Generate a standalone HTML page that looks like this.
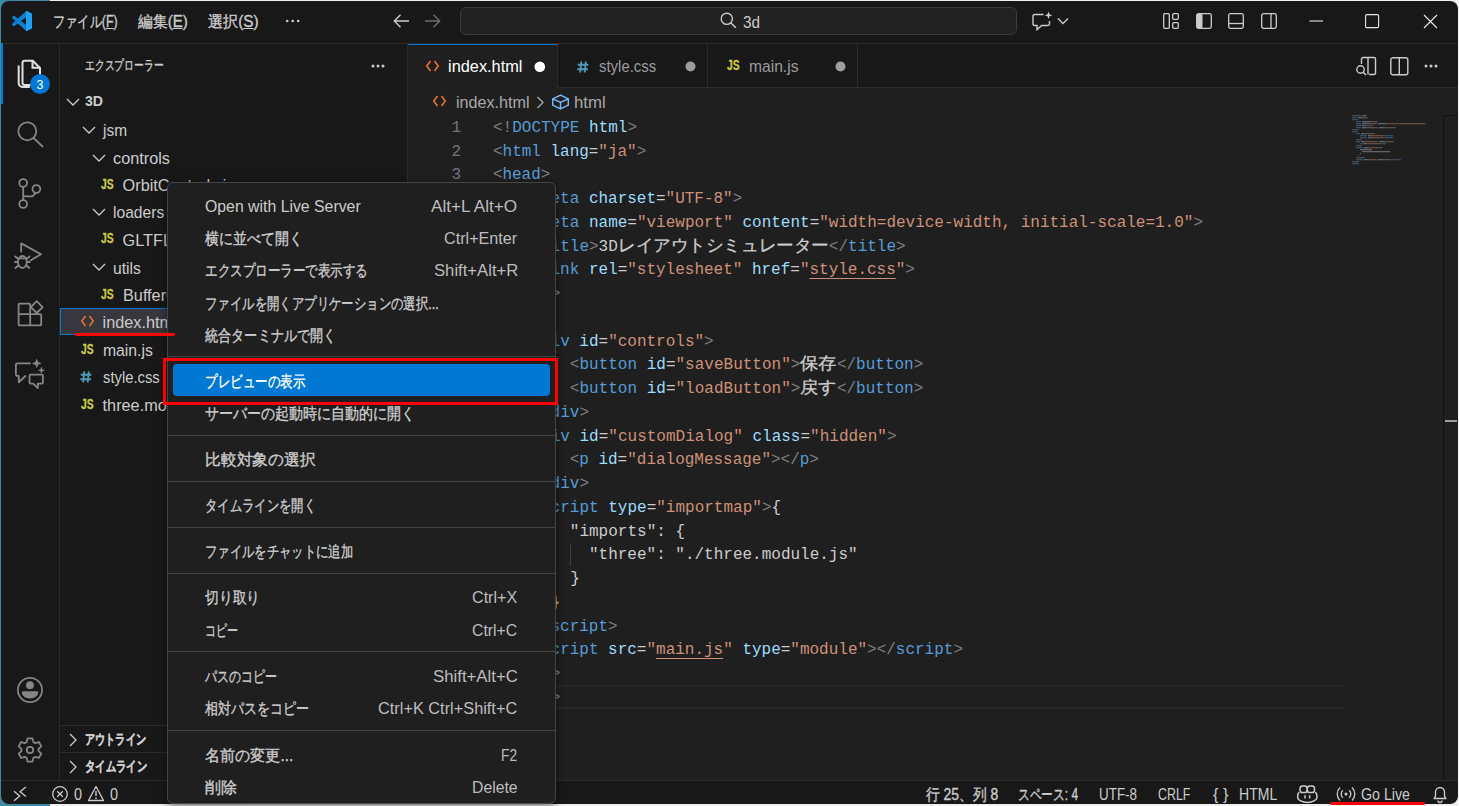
<!DOCTYPE html>
<html><head><meta charset="utf-8"><style>
*{box-sizing:border-box}
html,body{margin:0;padding:0;width:1459px;height:806px;overflow:hidden;background:#f0f0f0;font-family:"Liberation Sans",sans-serif;position:relative}
.a{position:absolute}
.t{position:absolute;white-space:nowrap;color:#cccccc}
.fit>span{display:inline-block;transform-origin:0 50%}
.cjk{-webkit-text-stroke:0.35px currentColor}
svg{position:absolute;overflow:visible}
.code{position:absolute;font-family:"Liberation Mono",monospace;font-size:16px;white-space:pre;line-height:23.75px;color:#cccccc}
.ln{position:absolute;font-family:"Liberation Mono",monospace;font-size:16px;line-height:23.75px;text-align:right}
.jpc{display:inline-block;overflow:visible;white-space:nowrap;vertical-align:baseline;color:#cccccc;font-family:"Liberation Sans",sans-serif;font-size:17px;line-height:20px;-webkit-text-stroke:0.3px #cccccc}
.jpc>span{display:inline-block;transform-origin:0 50%}
.fitc>span{display:inline-block;transform-origin:0 50%;white-space:pre}
</style></head><body>
<div class="a" style="left:0;top:0;width:1459px;height:806px;background:linear-gradient(90deg,#3f89a5 0,#3f89a5 50px,#eeeeee 50px,#f2f2f2 100%)"></div>
<div class="a" style="left:1px;top:1px;width:1457px;height:803px;background:#181818;border-radius:8px;overflow:hidden">
<div class="a" style="left:407px;top:87px;width:1050px;height:693px;background:#1f1f1f"></div>
</div>
<div class="a" style="left:1px;top:43px;width:1457px;height:1px;background:#2b2b2b;"></div>
<div class="a" style="left:59px;top:44px;width:1px;height:736px;background:#2b2b2b;"></div>
<div class="a" style="left:407px;top:44px;width:1px;height:736px;background:#2b2b2b;"></div>
<div class="a" style="left:1px;top:780px;width:1457px;height:1px;background:#2b2b2b;"></div>
<svg style="left:12px;top:11px" width="20" height="20" viewBox="0 0 100 100"><path d="M96.5 10.8L75.9.9a6.2 6.2 0 0 0-7.1 1.2L29.4 38 12.2 25a4.2 4.2 0 0 0-5.3.2l-5.5 5a4.2 4.2 0 0 0 0 6.2L16.3 50 1.4 63.6a4.2 4.2 0 0 0 0 6.2l5.5 5a4.2 4.2 0 0 0 5.3.2l17.2-13 39.4 36a6.2 6.2 0 0 0 7.1 1.2l20.6-9.9a6.3 6.3 0 0 0 3.5-5.6V16.4a6.3 6.3 0 0 0-3.5-5.6zM75 72.7L45.1 50 75 27.3z" fill="#0a7fd0"/><path d="M96.5 10.8L75.9.9a6.2 6.2 0 0 0-5.9.3L70 98.8a6.2 6.2 0 0 0 5.9.3l20.6-9.9a6.3 6.3 0 0 0 3.5-5.6V16.4a6.3 6.3 0 0 0-3.5-5.6z" fill="#22a0f0"/></svg>
<div class="t fit cjk" style="left:52.6px;top:10.7px;font-size:16.25px;line-height:20px;color:#cccccc;font-weight:normal;width:64.8px;"><span>ファイル(<u>F</u>)</span></div>
<div class="t fit cjk" style="left:137.5px;top:10.7px;font-size:16.25px;line-height:20px;color:#cccccc;font-weight:normal;width:50.0px;"><span>編集(<u>E</u>)</span></div>
<div class="t fit cjk" style="left:208.0px;top:10.7px;font-size:16.25px;line-height:20px;color:#cccccc;font-weight:normal;width:51.0px;"><span>選択(<u>S</u>)</span></div>
<svg style="left:285px;top:19px" width="16" height="4"><circle cx="2.2" cy="2" r="1.3" fill="#ccc"/><circle cx="7.7" cy="2" r="1.3" fill="#ccc"/><circle cx="13.2" cy="2" r="1.3" fill="#ccc"/></svg>
<svg style="left:392px;top:13px" width="18" height="16"><path d="M17 8H2.5M8.5 1.8L2.3 8l6.2 6.2" stroke="#cccccc" stroke-width="1.4" fill="none"/></svg>
<svg style="left:424px;top:13px" width="18" height="16"><path d="M1 8h14.5M9.5 1.8L15.7 8l-6.2 6.2" stroke="#6b6b6b" stroke-width="1.4" fill="none"/></svg>
<div class="a" style="left:460px;top:7px;width:557px;height:28px;background:#222222;border:1px solid #3c3c3c;border-radius:6px"></div>
<svg style="left:720px;top:12px" width="17" height="17"><circle cx="6.8" cy="6.8" r="5.6" stroke="#cccccc" stroke-width="1.4" fill="none"/><path d="M10.8 10.8L15.8 15.8" stroke="#cccccc" stroke-width="1.5"/></svg>
<div class="t fit" style="left:743.0px;top:11.5px;font-size:16.25px;line-height:20px;color:#cccccc;font-weight:normal;width:17.0px;"><span>3d</span></div>
<svg style="left:1031px;top:10px" width="24" height="22"><path d="M12.5 4.5H3.8A1.8 1.8 0 0 0 2 6.3v7.4a1.8 1.8 0 0 0 1.8 1.8H6v4.2l4.6-4.2h6.1a1.8 1.8 0 0 0 1.8-1.8V11" stroke="#cccccc" stroke-width="1.4" fill="none"/><path d="M17.5 1.5l1 2.8 2.8 1-2.8 1-1 2.8-1-2.8-2.8-1 2.8-1z" fill="#cccccc"/></svg>
<svg style="left:1057px;top:17px" width="12" height="8"><path d="M1 1.5l5 5 5-5" stroke="#cccccc" stroke-width="1.3" fill="none"/></svg>
<svg style="left:1163px;top:13px" width="16" height="16"><rect x="0.7" y="0.7" width="5.6" height="14.6" rx="1" stroke="#cccccc" stroke-width="1.3" fill="none"/><rect x="9.7" y="0.7" width="5.6" height="5.6" rx="1" stroke="#cccccc" stroke-width="1.3" fill="none"/><rect x="9.7" y="9.7" width="5.6" height="5.6" rx="1" stroke="#cccccc" stroke-width="1.3" fill="none"/></svg>
<svg style="left:1196px;top:13px" width="16" height="16"><rect x="0.7" y="0.7" width="14.6" height="14.6" rx="1.8" stroke="#cccccc" stroke-width="1.3" fill="none"/><rect x="1" y="1" width="5.5" height="14" rx="1" fill="#cccccc"/></svg>
<svg style="left:1228px;top:13px" width="16" height="16"><rect x="0.7" y="0.7" width="14.6" height="14.6" rx="1.8" stroke="#cccccc" stroke-width="1.3" fill="none"/><path d="M1 10.5h14" stroke="#cccccc" stroke-width="1.3"/></svg>
<svg style="left:1261px;top:13px" width="16" height="16"><rect x="0.7" y="0.7" width="14.6" height="14.6" rx="1.8" stroke="#cccccc" stroke-width="1.3" fill="none"/><path d="M10 1v14" stroke="#cccccc" stroke-width="1.3"/></svg>
<svg style="left:1309px;top:20px" width="15" height="2"><path d="M0.5 1h13.5" stroke="#e6e6e6" stroke-width="1.1"/></svg>
<svg style="left:1365px;top:14px" width="15" height="15"><rect x="0.6" y="0.6" width="13" height="13" rx="1.2" stroke="#e6e6e6" stroke-width="1.1" fill="none"/></svg>
<svg style="left:1423px;top:14px" width="15" height="15"><path d="M1 1l13 13M14 1L1 14" stroke="#e6e6e6" stroke-width="1.1"/></svg>
<div class="a" style="left:1px;top:43px;width:2px;height:61px;background:#0078d4;"></div>
<svg style="left:0px;top:0px" width="60" height="110"><path d="M24.5 60.8h8.3l7.2 7.2v15.2a1.8 1.8 0 0 1-1.8 1.8H24.5a2 2 0 0 1-2-2V62.8a2 2 0 0 1 2-2z" stroke="#e0e0e0" stroke-width="2" fill="none"/><path d="M32.5 61v6.8h7.3" stroke="#e0e0e0" stroke-width="2" fill="none"/><path d="M18.7 65.5v17.8a3.6 3.6 0 0 0 3.6 3.6h7.5" stroke="#e0e0e0" stroke-width="2" fill="none"/></svg>
<svg style="left:30px;top:74px" width="20" height="20"><circle cx="10" cy="10" r="10" fill="#0078d4"/><text x="10" y="14.6" text-anchor="middle" font-family="Liberation Sans" font-size="12.5" fill="#fff">3</text></svg>
<svg style="left:0px;top:0px" width="60" height="400"><g stroke="#868686" stroke-width="1.8" fill="none" stroke-linecap="round" stroke-linejoin="round"><circle cx="27.3" cy="131.3" r="9"/><path d="M34 138.3L42.5 146.5"/><circle cx="23.2" cy="183" r="3.9"/><circle cx="23.2" cy="204" r="3.9"/><circle cx="36.4" cy="189" r="3.9"/><path d="M23.2 187v13M35.8 192.8L32.5 196.4H23.4"/><path d="M21.2 251.5V243.4L41 254.2 30.8 260.3"/><ellipse cx="22.4" cy="262" rx="4.4" ry="6"/><path d="M18.2 258.3h8.4M15.2 256.5l2.8 2.2M29.6 256.5l-2.8 2.2M15 262h3M26.8 262h3M15.4 268l2.8-2.3M29.4 268l-2.8-2.3"/><path d="M19.6 303.6h9.6a1 1 0 0 1 1 1V314.2h10a1 1 0 0 1 1 1v9.2a1 1 0 0 1-1 1H19.6a1 1 0 0 1-1-1V304.6a1 1 0 0 1 1-1zM18.6 314.2h11.6V325.4"/><path d="M36.7 301.2l5.9 5.9-5.9 5.9-5.9-5.9z"/><path d="M30 363.4H17.4a1.5 1.5 0 0 0-1.5 1.5v9.6a1.5 1.5 0 0 0 1.5 1.5h1.4v6.3l6.6-6.3"/><path d="M30.7 374.6h11a1.2 1.2 0 0 1 1.2 1.2v6.6a1.2 1.2 0 0 1-1.2 1.2h-3.9v4.5l-4.6-4.5h-2.5a1.2 1.2 0 0 1-1.2-1.2v-6.6a1.2 1.2 0 0 1 1.2-1.2z"/></g><path d="M36.7 358.5l1.4 3.5 3.5 1.4-3.5 1.4-1.4 3.5-1.4-3.5-3.5-1.4 3.5-1.4z" fill="#868686"/><path d="M41.4 366.7l1 2.5 2.5 1-2.5 1-1 2.5-1-2.5-2.5-1 2.5-1z" fill="#868686"/></svg>
<svg style="left:17px;top:677px" width="26" height="26"><circle cx="13" cy="13" r="12.1" stroke="#868686" stroke-width="1.7" fill="none"/><circle cx="13" cy="8.2" r="3.9" fill="#868686"/><path d="M6.2 14.3h13.6a1.3 1.3 0 0 1 1.3 1.3c0 3.5-3.6 5.8-8.1 5.8s-8.1-2.3-8.1-5.8a1.3 1.3 0 0 1 1.3-1.3z" fill="#868686"/></svg>
<svg style="left:17px;top:737px" width="26" height="26"><polygon points="9.65,5.08 10.52,1.36 15.48,1.36 16.35,5.08 18.19,6.14 21.84,5.03 24.32,9.33 21.53,11.94 21.53,14.06 24.32,16.67 21.84,20.97 18.19,19.86 16.35,20.92 15.48,24.64 10.52,24.64 9.65,20.92 7.81,19.86 4.16,20.97 1.68,16.67 4.47,14.06 4.47,11.94 1.68,9.33 4.16,5.03 7.81,6.14" stroke="#868686" stroke-width="1.8" fill="none" stroke-linejoin="round"/><circle cx="13" cy="13" r="3.2" stroke="#868686" stroke-width="1.8" fill="none"/></svg>
<div class="t fit cjk" style="left:85.0px;top:56.0px;font-size:13.75px;line-height:20px;color:#cccccc;font-weight:normal;width:78.5px;"><span>エクスプローラー</span></div>
<svg style="left:371px;top:64px" width="14" height="4"><circle cx="2" cy="2" r="1.5" fill="#ccc"/><circle cx="7" cy="2" r="1.5" fill="#ccc"/><circle cx="12" cy="2" r="1.5" fill="#ccc"/></svg>
<svg style="left:66px;top:98px" width="14" height="8"><path d="M1 1l6 6 6-6" stroke="#cccccc" stroke-width="1.3" fill="none"/></svg>
<div class="t fit" style="left:85.0px;top:92.0px;font-size:13.75px;line-height:20px;color:#cccccc;font-weight:bold;width:18.5px;"><span>3D</span></div>
<svg style="left:82px;top:126px" width="14" height="8"><path d="M1 1l6 6 6-6" stroke="#cccccc" stroke-width="1.3" fill="none"/></svg>
<div class="t fit" style="left:102.6px;top:120.0px;font-size:16.25px;line-height:20px;color:#cccccc;font-weight:normal;width:23.8px;"><span>jsm</span></div>
<svg style="left:92px;top:154px" width="14" height="8"><path d="M1 1l6 6 6-6" stroke="#cccccc" stroke-width="1.3" fill="none"/></svg>
<div class="t fit" style="left:113.0px;top:147.5px;font-size:16.25px;line-height:20px;color:#cccccc;font-weight:normal;width:57.0px;"><span>controls</span></div>
<div class="t fit" style="left:101.0px;top:174.0px;font-size:14px;line-height:20px;color:#cbcb41;font-weight:bold;-webkit-text-stroke:0.3px #cbcb41;width:12.5px;"><span>JS</span></div>
<div class="t" style="left:122.6px;top:175.0px;font-size:16.25px;line-height:20px;color:#cccccc;font-weight:normal;">OrbitControls.js</div>
<svg style="left:92px;top:208px" width="14" height="8"><path d="M1 1l6 6 6-6" stroke="#cccccc" stroke-width="1.3" fill="none"/></svg>
<div class="t fit" style="left:113.0px;top:202.0px;font-size:16.25px;line-height:20px;color:#cccccc;font-weight:normal;width:51.0px;"><span>loaders</span></div>
<div class="t fit" style="left:101.0px;top:228.0px;font-size:14px;line-height:20px;color:#cbcb41;font-weight:bold;-webkit-text-stroke:0.3px #cbcb41;width:12.5px;"><span>JS</span></div>
<div class="t" style="left:122.6px;top:229.5px;font-size:16.25px;line-height:20px;color:#cccccc;font-weight:normal;">GLTFLoader.js</div>
<svg style="left:92px;top:263px" width="14" height="8"><path d="M1 1l6 6 6-6" stroke="#cccccc" stroke-width="1.3" fill="none"/></svg>
<div class="t fit" style="left:113.0px;top:257.5px;font-size:16.25px;line-height:20px;color:#cccccc;font-weight:normal;width:28.0px;"><span>utils</span></div>
<div class="t fit" style="left:101.0px;top:283.5px;font-size:14px;line-height:20px;color:#cbcb41;font-weight:bold;-webkit-text-stroke:0.3px #cbcb41;width:12.5px;"><span>JS</span></div>
<div class="t" style="left:123.0px;top:285.0px;font-size:16.25px;line-height:20px;color:#cccccc;font-weight:normal;">BufferGeometryUtils.js</div>
<div class="a" style="left:60px;top:308px;width:347px;height:27px;background:#37373d;border:1px solid #0078d4"></div>
<svg style="left:81px;top:315px" width="13" height="12"><path d="M4.5 1L0.8 6l3.7 5M8.5 1l3.7 5-3.7 5" stroke="#e8702f" stroke-width="1.6" fill="none"/></svg>
<div class="t" style="left:102.6px;top:312.0px;font-size:16.25px;line-height:20px;color:#cccccc;font-weight:normal;">index.html</div>
<div class="t fit" style="left:81.0px;top:338.5px;font-size:14px;line-height:20px;color:#cbcb41;font-weight:bold;-webkit-text-stroke:0.3px #cbcb41;width:12.5px;"><span>JS</span></div>
<div class="t fit" style="left:102.6px;top:340.0px;font-size:16.25px;line-height:20px;color:#cccccc;font-weight:normal;width:49.4px;"><span>main.js</span></div>
<svg style="left:80px;top:371px" width="12" height="12"><path d="M4.3 0.5L3.2 11.5M8.8 0.5L7.7 11.5M0.8 3.8h10.6M0.4 8.2h10.6" stroke="#519aba" stroke-width="1.9" fill="none"/></svg>
<div class="t fit" style="left:102.6px;top:367.0px;font-size:16.25px;line-height:20px;color:#cccccc;font-weight:normal;width:56.4px;"><span>style.css</span></div>
<div class="t fit" style="left:81.0px;top:393.5px;font-size:14px;line-height:20px;color:#cbcb41;font-weight:bold;-webkit-text-stroke:0.3px #cbcb41;width:12.5px;"><span>JS</span></div>
<div class="t" style="left:102.6px;top:394.5px;font-size:16.25px;line-height:20px;color:#cccccc;font-weight:normal;">three.module.js</div>
<div class="a" style="left:75px;top:332.5px;width:100px;height:3px;background:#ff0000;border-radius:1.5px"></div>
<div class="a" style="left:60px;top:725px;width:347px;height:1px;background:#2b2b2b;"></div>
<div class="a" style="left:60px;top:752px;width:347px;height:1px;background:#2b2b2b;"></div>
<svg style="left:69px;top:733px" width="9" height="14"><path d="M1 1l6 6-6 6" stroke="#cccccc" stroke-width="1.3" fill="none"/></svg>
<div class="t fit cjk" style="left:85.0px;top:730.0px;font-size:13.75px;line-height:20px;color:#cccccc;font-weight:bold;width:61.0px;"><span>アウトライン</span></div>
<svg style="left:69px;top:760px" width="9" height="14"><path d="M1 1l6 6-6 6" stroke="#cccccc" stroke-width="1.3" fill="none"/></svg>
<div class="t fit cjk" style="left:85.0px;top:757.0px;font-size:13.75px;line-height:20px;color:#cccccc;font-weight:bold;width:62.0px;"><span>タイムライン</span></div>
<div class="a" style="left:408px;top:44px;width:149px;height:44px;background:#1f1f1f;border-top:1px solid #0078d4"></div>
<div class="a" style="left:408px;top:87px;width:1050px;height:1px;background:#2b2b2b;"></div>
<div class="a" style="left:408px;top:87px;width:149px;height:1px;background:#1f1f1f;"></div>
<div class="a" style="left:557px;top:44px;width:1px;height:43px;background:#2b2b2b;"></div>
<div class="a" style="left:707px;top:44px;width:1px;height:43px;background:#2b2b2b;"></div>
<div class="a" style="left:857px;top:44px;width:1px;height:43px;background:#2b2b2b;"></div>
<svg style="left:426px;top:59.5px" width="13" height="12"><path d="M4.5 1L0.8 6l3.7 5M8.5 1l3.7 5-3.7 5" stroke="#e8702f" stroke-width="1.6" fill="none"/></svg>
<div class="t fit" style="left:447.6px;top:55.8px;font-size:16.25px;line-height:20px;color:#ffffff;font-weight:normal;width:74.4px;"><span>index.html</span></div>
<svg style="left:534px;top:61px" width="12" height="12"><circle cx="5.8" cy="5.8" r="5.3" fill="#ffffff"/></svg>
<svg style="left:577px;top:60.5px" width="12" height="12"><path d="M4.3 0.5L3.2 11.5M8.8 0.5L7.7 11.5M0.8 3.8h10.6M0.4 8.2h10.6" stroke="#519aba" stroke-width="1.9" fill="none"/></svg>
<div class="t fit" style="left:598.5px;top:55.8px;font-size:16.25px;line-height:20px;color:#9d9d9d;font-weight:normal;width:57.0px;"><span>style.css</span></div>
<svg style="left:685px;top:61px" width="12" height="12"><circle cx="5.5" cy="5.5" r="5" fill="#9d9d9d"/></svg>
<div class="t fit" style="left:726.5px;top:55.0px;font-size:14px;line-height:20px;color:#cbcb41;font-weight:bold;-webkit-text-stroke:0.3px #cbcb41;width:12.5px;"><span>JS</span></div>
<div class="t fit" style="left:749.0px;top:55.8px;font-size:16.25px;line-height:20px;color:#9d9d9d;font-weight:normal;width:49.0px;"><span>main.js</span></div>
<svg style="left:835px;top:61px" width="12" height="12"><circle cx="5.5" cy="5.5" r="5" fill="#9d9d9d"/></svg>
<svg style="left:1355px;top:56px" width="22" height="20"><path d="M8 1.5h11a1.5 1.5 0 0 1 1.5 1.5v14a1.5 1.5 0 0 1-1.5 1.5h-5M13 1.5v17M8 1.5a1.5 1.5 0 0 0-1.5 1.5v5" stroke="#cccccc" stroke-width="1.4" fill="none"/><circle cx="5.5" cy="13.5" r="3.7" stroke="#cccccc" stroke-width="1.4" fill="none"/><path d="M8.2 16.2L11 19" stroke="#cccccc" stroke-width="1.5"/></svg>
<svg style="left:1390px;top:57px" width="19" height="19"><rect x="0.8" y="0.8" width="17" height="17" rx="2" stroke="#cccccc" stroke-width="1.4" fill="none"/><path d="M9.3 1v17" stroke="#cccccc" stroke-width="1.4"/></svg>
<svg style="left:1424px;top:64px" width="14" height="4"><circle cx="2" cy="2" r="1.5" fill="#ccc"/><circle cx="7" cy="2" r="1.5" fill="#ccc"/><circle cx="12" cy="2" r="1.5" fill="#ccc"/></svg>
<svg style="left:433px;top:95px" width="13" height="12"><path d="M4.5 1L0.8 6l3.7 5M8.5 1l3.7 5-3.7 5" stroke="#e8702f" stroke-width="1.6" fill="none"/></svg>
<div class="t fit" style="left:455.5px;top:91.8px;font-size:16.25px;line-height:20px;color:#a9a9a9;font-weight:normal;width:73.5px;"><span>index.html</span></div>
<svg style="left:536px;top:96px" width="9" height="13"><path d="M1.5 1l5.5 5.5-5.5 5.5" stroke="#a9a9a9" stroke-width="1.3" fill="none"/></svg>
<svg style="left:551px;top:94px" width="19" height="16"><path d="M9.5 1.2l7.8 3.6v6.4l-7.8 3.6-7.8-3.6V4.8z M1.7 4.8l7.8 3.6 7.8-3.6M9.5 8.4v6.4" stroke="#75beff" stroke-width="1.4" fill="none" stroke-linejoin="round"/></svg>
<div class="t fit" style="left:574.0px;top:91.8px;font-size:16.25px;line-height:20px;color:#a9a9a9;font-weight:normal;width:32.0px;"><span>html</span></div>
<div class="a" style="left:480px;top:685px;width:864px;height:24px;background:transparent;border-top:2px solid #282828;border-bottom:2px solid #282828"></div>
<div class="a" style="left:570px;top:543px;width:1px;height:23px;background:#404040;"></div>
<div class="ln" style="left:420px;top:116.92px;width:41px;color:#6e7681">1</div>
<div class="code fitc" style="left:493.0px;top:116.92px;width:144.00px"><span><span style="color:#808080">&lt;!</span><span style="color:#569cd6">DOCTYPE</span><span style="color:#cccccc"> </span><span style="color:#9cdcfe">html</span><span style="color:#808080">&gt;</span></span></div>
<div class="ln" style="left:420px;top:140.68px;width:41px;color:#6e7681">2</div>
<div class="code fitc" style="left:493.0px;top:140.68px;width:153.60px"><span><span style="color:#808080">&lt;</span><span style="color:#569cd6">html</span><span style="color:#cccccc"> </span><span style="color:#9cdcfe">lang</span><span style="color:#cccccc">=</span><span style="color:#ce9178">&quot;</span><span style="color:#ce9178">ja</span><span style="color:#ce9178">&quot;</span><span style="color:#808080">&gt;</span></span></div>
<div class="ln" style="left:420px;top:164.43px;width:41px;color:#6e7681">3</div>
<div class="code fitc" style="left:493.0px;top:164.43px;width:57.60px"><span><span style="color:#808080">&lt;</span><span style="color:#569cd6">head</span><span style="color:#808080">&gt;</span></span></div>
<div class="ln" style="left:420px;top:188.18px;width:41px;color:#6e7681">4</div>
<div class="code fitc" style="left:493.0px;top:188.18px;width:249.60px"><span>    <span style="color:#808080">&lt;</span><span style="color:#569cd6">meta</span><span style="color:#cccccc"> </span><span style="color:#9cdcfe">charset</span><span style="color:#cccccc">=</span><span style="color:#ce9178">&quot;</span><span style="color:#ce9178">UTF-8</span><span style="color:#ce9178">&quot;</span><span style="color:#808080">&gt;</span></span></div>
<div class="ln" style="left:420px;top:211.93px;width:41px;color:#6e7681">5</div>
<div class="code fitc" style="left:493.0px;top:211.93px;width:710.40px"><span>    <span style="color:#808080">&lt;</span><span style="color:#569cd6">meta</span><span style="color:#cccccc"> </span><span style="color:#9cdcfe">name</span><span style="color:#cccccc">=</span><span style="color:#ce9178">&quot;</span><span style="color:#ce9178">viewport</span><span style="color:#ce9178">&quot;</span><span style="color:#cccccc"> </span><span style="color:#9cdcfe">content</span><span style="color:#cccccc">=</span><span style="color:#ce9178">&quot;</span><span style="color:#ce9178">width=device-width, initial-scale=1.0</span><span style="color:#ce9178">&quot;</span><span style="color:#808080">&gt;</span></span></div>
<div class="ln" style="left:420px;top:235.68px;width:41px;color:#6e7681">6</div>
<div class="code fitc" style="left:493.0px;top:235.68px;width:412.80px"><span>    <span style="color:#808080">&lt;</span><span style="color:#569cd6">title</span><span style="color:#808080">&gt;</span><span style="color:#cccccc">3D</span><span class="jpc" style="width:211.2px"><span>レイアウトシミュレーター</span></span><span style="color:#808080">&lt;/</span><span style="color:#569cd6">title</span><span style="color:#808080">&gt;</span></span></div>
<div class="ln" style="left:420px;top:259.43px;width:41px;color:#6e7681">7</div>
<div class="code fitc" style="left:493.0px;top:259.43px;width:422.40px"><span>    <span style="color:#808080">&lt;</span><span style="color:#569cd6">link</span><span style="color:#cccccc"> </span><span style="color:#9cdcfe">rel</span><span style="color:#cccccc">=</span><span style="color:#ce9178">&quot;</span><span style="color:#ce9178">stylesheet</span><span style="color:#ce9178">&quot;</span><span style="color:#cccccc"> </span><span style="color:#9cdcfe">href</span><span style="color:#cccccc">=</span><span style="color:#ce9178">&quot;</span><span style="color:#ce9178;text-decoration:underline;text-underline-offset:4px;text-decoration-thickness:1px">style.css</span><span style="color:#ce9178">&quot;</span><span style="color:#808080">&gt;</span></span></div>
<div class="ln" style="left:420px;top:283.18px;width:41px;color:#6e7681">8</div>
<div class="code fitc" style="left:493.0px;top:283.18px;width:67.20px"><span><span style="color:#808080">&lt;/</span><span style="color:#569cd6">head</span><span style="color:#808080">&gt;</span></span></div>
<div class="ln" style="left:420px;top:306.93px;width:41px;color:#6e7681">9</div>
<div class="code fitc" style="left:493.0px;top:306.93px;width:57.60px"><span><span style="color:#808080">&lt;</span><span style="color:#569cd6">body</span><span style="color:#808080">&gt;</span></span></div>
<div class="ln" style="left:420px;top:330.68px;width:41px;color:#6e7681">10</div>
<div class="code fitc" style="left:493.0px;top:330.68px;width:220.80px"><span>    <span style="color:#808080">&lt;</span><span style="color:#569cd6">div</span><span style="color:#cccccc"> </span><span style="color:#9cdcfe">id</span><span style="color:#cccccc">=</span><span style="color:#ce9178">&quot;</span><span style="color:#ce9178">controls</span><span style="color:#ce9178">&quot;</span><span style="color:#808080">&gt;</span></span></div>
<div class="ln" style="left:420px;top:354.43px;width:41px;color:#6e7681">11</div>
<div class="code fitc" style="left:493.0px;top:354.43px;width:430.10px"><span>        <span style="color:#808080">&lt;</span><span style="color:#569cd6">button</span><span style="color:#cccccc"> </span><span style="color:#9cdcfe">id</span><span style="color:#cccccc">=</span><span style="color:#ce9178">&quot;</span><span style="color:#ce9178">saveButton</span><span style="color:#ce9178">&quot;</span><span style="color:#808080">&gt;</span><span class="jpc" style="width:36.5px"><span>保存</span></span><span style="color:#808080">&lt;/</span><span style="color:#569cd6">button</span><span style="color:#808080">&gt;</span></span></div>
<div class="ln" style="left:420px;top:378.18px;width:41px;color:#6e7681">12</div>
<div class="code fitc" style="left:493.0px;top:378.18px;width:430.10px"><span>        <span style="color:#808080">&lt;</span><span style="color:#569cd6">button</span><span style="color:#cccccc"> </span><span style="color:#9cdcfe">id</span><span style="color:#cccccc">=</span><span style="color:#ce9178">&quot;</span><span style="color:#ce9178">loadButton</span><span style="color:#ce9178">&quot;</span><span style="color:#808080">&gt;</span><span class="jpc" style="width:36.5px"><span>戻す</span></span><span style="color:#808080">&lt;/</span><span style="color:#569cd6">button</span><span style="color:#808080">&gt;</span></span></div>
<div class="ln" style="left:420px;top:401.93px;width:41px;color:#6e7681">13</div>
<div class="code fitc" style="left:493.0px;top:401.93px;width:96.00px"><span>    <span style="color:#808080">&lt;/</span><span style="color:#569cd6">div</span><span style="color:#808080">&gt;</span></span></div>
<div class="ln" style="left:420px;top:425.68px;width:41px;color:#6e7681">14</div>
<div class="code fitc" style="left:493.0px;top:425.68px;width:403.20px"><span>    <span style="color:#808080">&lt;</span><span style="color:#569cd6">div</span><span style="color:#cccccc"> </span><span style="color:#9cdcfe">id</span><span style="color:#cccccc">=</span><span style="color:#ce9178">&quot;</span><span style="color:#ce9178">customDialog</span><span style="color:#ce9178">&quot;</span><span style="color:#cccccc"> </span><span style="color:#9cdcfe">class</span><span style="color:#cccccc">=</span><span style="color:#ce9178">&quot;</span><span style="color:#ce9178">hidden</span><span style="color:#ce9178">&quot;</span><span style="color:#808080">&gt;</span></span></div>
<div class="ln" style="left:420px;top:449.43px;width:41px;color:#6e7681">15</div>
<div class="code fitc" style="left:493.0px;top:449.43px;width:326.40px"><span>        <span style="color:#808080">&lt;</span><span style="color:#569cd6">p</span><span style="color:#cccccc"> </span><span style="color:#9cdcfe">id</span><span style="color:#cccccc">=</span><span style="color:#ce9178">&quot;</span><span style="color:#ce9178">dialogMessage</span><span style="color:#ce9178">&quot;</span><span style="color:#808080">&gt;</span><span style="color:#808080">&lt;/</span><span style="color:#569cd6">p</span><span style="color:#808080">&gt;</span></span></div>
<div class="ln" style="left:420px;top:473.18px;width:41px;color:#6e7681">16</div>
<div class="code fitc" style="left:493.0px;top:473.18px;width:96.00px"><span>    <span style="color:#808080">&lt;/</span><span style="color:#569cd6">div</span><span style="color:#808080">&gt;</span></span></div>
<div class="ln" style="left:420px;top:496.93px;width:41px;color:#6e7681">17</div>
<div class="code fitc" style="left:493.0px;top:496.93px;width:288.00px"><span>    <span style="color:#808080">&lt;</span><span style="color:#569cd6">script</span><span style="color:#cccccc"> </span><span style="color:#9cdcfe">type</span><span style="color:#cccccc">=</span><span style="color:#ce9178">&quot;</span><span style="color:#ce9178">importmap</span><span style="color:#ce9178">&quot;</span><span style="color:#808080">&gt;</span><span style="color:#cccccc">{</span></span></div>
<div class="ln" style="left:420px;top:520.67px;width:41px;color:#6e7681">18</div>
<div class="code fitc" style="left:493.0px;top:520.67px;width:192.00px"><span>        <span style="color:#cccccc">&quot;imports&quot;: {</span></span></div>
<div class="ln" style="left:420px;top:544.42px;width:41px;color:#6e7681">19</div>
<div class="code fitc" style="left:493.0px;top:544.42px;width:364.80px"><span>          <span style="color:#cccccc">&quot;three&quot;: &quot;./three.module.js&quot;</span></span></div>
<div class="ln" style="left:420px;top:568.17px;width:41px;color:#6e7681">20</div>
<div class="code fitc" style="left:493.0px;top:568.17px;width:86.40px"><span>        <span style="color:#cccccc">}</span></span></div>
<div class="ln" style="left:420px;top:591.92px;width:41px;color:#6e7681">21</div>
<div class="code fitc" style="left:493.0px;top:591.92px;width:67.20px"><span>      <span style="color:#d7ba7d">}</span></span></div>
<div class="ln" style="left:420px;top:615.67px;width:41px;color:#6e7681">22</div>
<div class="code fitc" style="left:493.0px;top:615.67px;width:124.80px"><span>    <span style="color:#808080">&lt;/</span><span style="color:#569cd6">script</span><span style="color:#808080">&gt;</span></span></div>
<div class="ln" style="left:420px;top:639.42px;width:41px;color:#6e7681">23</div>
<div class="code fitc" style="left:493.0px;top:639.42px;width:470.40px"><span>    <span style="color:#808080">&lt;</span><span style="color:#569cd6">script</span><span style="color:#cccccc"> </span><span style="color:#9cdcfe">src</span><span style="color:#cccccc">=</span><span style="color:#ce9178">&quot;</span><span style="color:#ce9178;text-decoration:underline;text-underline-offset:4px;text-decoration-thickness:1px">main.js</span><span style="color:#ce9178">&quot;</span><span style="color:#cccccc"> </span><span style="color:#9cdcfe">type</span><span style="color:#cccccc">=</span><span style="color:#ce9178">&quot;</span><span style="color:#ce9178">module</span><span style="color:#ce9178">&quot;</span><span style="color:#808080">&gt;</span><span style="color:#808080">&lt;/</span><span style="color:#569cd6">script</span><span style="color:#808080">&gt;</span></span></div>
<div class="ln" style="left:420px;top:663.17px;width:41px;color:#6e7681">24</div>
<div class="code fitc" style="left:493.0px;top:663.17px;width:67.20px"><span><span style="color:#808080">&lt;/</span><span style="color:#569cd6">body</span><span style="color:#808080">&gt;</span></span></div>
<div class="ln" style="left:420px;top:686.92px;width:41px;color:#cccccc">25</div>
<div class="code fitc" style="left:493.0px;top:686.92px;width:67.20px"><span><span style="color:#808080">&lt;/</span><span style="color:#569cd6">html</span><span style="color:#808080">&gt;</span></span></div>
<svg style="left:1352px;top:115px" width="90" height="65"><rect x="0.00" y="0.00" width="2.00" height="1.3" fill="#808080" opacity="0.4"/><rect x="2.00" y="0.00" width="7.00" height="1.3" fill="#569cd6" opacity="0.4"/><rect x="10.00" y="0.00" width="4.00" height="1.3" fill="#9cdcfe" opacity="0.4"/><rect x="14.00" y="0.00" width="1.00" height="1.3" fill="#808080" opacity="0.4"/><rect x="0.00" y="2.00" width="1.00" height="1.3" fill="#808080" opacity="0.4"/><rect x="1.00" y="2.00" width="4.00" height="1.3" fill="#569cd6" opacity="0.4"/><rect x="6.00" y="2.00" width="4.00" height="1.3" fill="#9cdcfe" opacity="0.4"/><rect x="10.00" y="2.00" width="1.00" height="1.3" fill="#cccccc" opacity="0.4"/><rect x="11.00" y="2.00" width="1.00" height="1.3" fill="#ce9178" opacity="0.4"/><rect x="12.00" y="2.00" width="2.00" height="1.3" fill="#ce9178" opacity="0.4"/><rect x="14.00" y="2.00" width="1.00" height="1.3" fill="#ce9178" opacity="0.4"/><rect x="15.00" y="2.00" width="1.00" height="1.3" fill="#808080" opacity="0.4"/><rect x="0.00" y="4.00" width="1.00" height="1.3" fill="#808080" opacity="0.4"/><rect x="1.00" y="4.00" width="4.00" height="1.3" fill="#569cd6" opacity="0.4"/><rect x="5.00" y="4.00" width="1.00" height="1.3" fill="#808080" opacity="0.4"/><rect x="4.00" y="6.00" width="1.00" height="1.3" fill="#808080" opacity="0.4"/><rect x="5.00" y="6.00" width="4.00" height="1.3" fill="#569cd6" opacity="0.4"/><rect x="10.00" y="6.00" width="7.00" height="1.3" fill="#9cdcfe" opacity="0.4"/><rect x="17.00" y="6.00" width="1.00" height="1.3" fill="#cccccc" opacity="0.4"/><rect x="18.00" y="6.00" width="1.00" height="1.3" fill="#ce9178" opacity="0.4"/><rect x="19.00" y="6.00" width="5.00" height="1.3" fill="#ce9178" opacity="0.4"/><rect x="24.00" y="6.00" width="1.00" height="1.3" fill="#ce9178" opacity="0.4"/><rect x="25.00" y="6.00" width="1.00" height="1.3" fill="#808080" opacity="0.4"/><rect x="4.00" y="8.00" width="1.00" height="1.3" fill="#808080" opacity="0.4"/><rect x="5.00" y="8.00" width="4.00" height="1.3" fill="#569cd6" opacity="0.4"/><rect x="10.00" y="8.00" width="4.00" height="1.3" fill="#9cdcfe" opacity="0.4"/><rect x="14.00" y="8.00" width="1.00" height="1.3" fill="#cccccc" opacity="0.4"/><rect x="15.00" y="8.00" width="1.00" height="1.3" fill="#ce9178" opacity="0.4"/><rect x="16.00" y="8.00" width="8.00" height="1.3" fill="#ce9178" opacity="0.4"/><rect x="24.00" y="8.00" width="1.00" height="1.3" fill="#ce9178" opacity="0.4"/><rect x="26.00" y="8.00" width="7.00" height="1.3" fill="#9cdcfe" opacity="0.4"/><rect x="33.00" y="8.00" width="1.00" height="1.3" fill="#cccccc" opacity="0.4"/><rect x="34.00" y="8.00" width="1.00" height="1.3" fill="#ce9178" opacity="0.4"/><rect x="35.00" y="8.00" width="37.00" height="1.3" fill="#ce9178" opacity="0.4"/><rect x="72.00" y="8.00" width="1.00" height="1.3" fill="#ce9178" opacity="0.4"/><rect x="73.00" y="8.00" width="1.00" height="1.3" fill="#808080" opacity="0.4"/><rect x="4.00" y="10.00" width="1.00" height="1.3" fill="#808080" opacity="0.4"/><rect x="5.00" y="10.00" width="5.00" height="1.3" fill="#569cd6" opacity="0.4"/><rect x="10.00" y="10.00" width="1.00" height="1.3" fill="#808080" opacity="0.4"/><rect x="11.00" y="10.00" width="2.00" height="1.3" fill="#cccccc" opacity="0.4"/><rect x="13.00" y="10.00" width="2.00" height="1.3" fill="#808080" opacity="0.4"/><rect x="15.00" y="10.00" width="5.00" height="1.3" fill="#569cd6" opacity="0.4"/><rect x="20.00" y="10.00" width="1.00" height="1.3" fill="#808080" opacity="0.4"/><rect x="4.00" y="12.00" width="1.00" height="1.3" fill="#808080" opacity="0.4"/><rect x="5.00" y="12.00" width="4.00" height="1.3" fill="#569cd6" opacity="0.4"/><rect x="10.00" y="12.00" width="3.00" height="1.3" fill="#9cdcfe" opacity="0.4"/><rect x="13.00" y="12.00" width="1.00" height="1.3" fill="#cccccc" opacity="0.4"/><rect x="14.00" y="12.00" width="1.00" height="1.3" fill="#ce9178" opacity="0.4"/><rect x="15.00" y="12.00" width="10.00" height="1.3" fill="#ce9178" opacity="0.4"/><rect x="25.00" y="12.00" width="1.00" height="1.3" fill="#ce9178" opacity="0.4"/><rect x="27.00" y="12.00" width="4.00" height="1.3" fill="#9cdcfe" opacity="0.4"/><rect x="31.00" y="12.00" width="1.00" height="1.3" fill="#cccccc" opacity="0.4"/><rect x="32.00" y="12.00" width="1.00" height="1.3" fill="#ce9178" opacity="0.4"/><rect x="33.00" y="12.00" width="9.00" height="1.3" fill="#ce9178" opacity="0.4"/><rect x="42.00" y="12.00" width="1.00" height="1.3" fill="#ce9178" opacity="0.4"/><rect x="43.00" y="12.00" width="1.00" height="1.3" fill="#808080" opacity="0.4"/><rect x="0.00" y="14.00" width="2.00" height="1.3" fill="#808080" opacity="0.4"/><rect x="2.00" y="14.00" width="4.00" height="1.3" fill="#569cd6" opacity="0.4"/><rect x="6.00" y="14.00" width="1.00" height="1.3" fill="#808080" opacity="0.4"/><rect x="0.00" y="16.00" width="1.00" height="1.3" fill="#808080" opacity="0.4"/><rect x="1.00" y="16.00" width="4.00" height="1.3" fill="#569cd6" opacity="0.4"/><rect x="5.00" y="16.00" width="1.00" height="1.3" fill="#808080" opacity="0.4"/><rect x="4.00" y="18.00" width="1.00" height="1.3" fill="#808080" opacity="0.4"/><rect x="5.00" y="18.00" width="3.00" height="1.3" fill="#569cd6" opacity="0.4"/><rect x="9.00" y="18.00" width="2.00" height="1.3" fill="#9cdcfe" opacity="0.4"/><rect x="11.00" y="18.00" width="1.00" height="1.3" fill="#cccccc" opacity="0.4"/><rect x="12.00" y="18.00" width="1.00" height="1.3" fill="#ce9178" opacity="0.4"/><rect x="13.00" y="18.00" width="8.00" height="1.3" fill="#ce9178" opacity="0.4"/><rect x="21.00" y="18.00" width="1.00" height="1.3" fill="#ce9178" opacity="0.4"/><rect x="22.00" y="18.00" width="1.00" height="1.3" fill="#808080" opacity="0.4"/><rect x="8.00" y="20.00" width="1.00" height="1.3" fill="#808080" opacity="0.4"/><rect x="9.00" y="20.00" width="6.00" height="1.3" fill="#569cd6" opacity="0.4"/><rect x="16.00" y="20.00" width="2.00" height="1.3" fill="#9cdcfe" opacity="0.4"/><rect x="18.00" y="20.00" width="1.00" height="1.3" fill="#cccccc" opacity="0.4"/><rect x="19.00" y="20.00" width="1.00" height="1.3" fill="#ce9178" opacity="0.4"/><rect x="20.00" y="20.00" width="10.00" height="1.3" fill="#ce9178" opacity="0.4"/><rect x="30.00" y="20.00" width="1.00" height="1.3" fill="#ce9178" opacity="0.4"/><rect x="31.00" y="20.00" width="1.00" height="1.3" fill="#808080" opacity="0.4"/><rect x="32.00" y="20.00" width="2.00" height="1.3" fill="#808080" opacity="0.4"/><rect x="34.00" y="20.00" width="6.00" height="1.3" fill="#569cd6" opacity="0.4"/><rect x="40.00" y="20.00" width="1.00" height="1.3" fill="#808080" opacity="0.4"/><rect x="8.00" y="22.00" width="1.00" height="1.3" fill="#808080" opacity="0.4"/><rect x="9.00" y="22.00" width="6.00" height="1.3" fill="#569cd6" opacity="0.4"/><rect x="16.00" y="22.00" width="2.00" height="1.3" fill="#9cdcfe" opacity="0.4"/><rect x="18.00" y="22.00" width="1.00" height="1.3" fill="#cccccc" opacity="0.4"/><rect x="19.00" y="22.00" width="1.00" height="1.3" fill="#ce9178" opacity="0.4"/><rect x="20.00" y="22.00" width="10.00" height="1.3" fill="#ce9178" opacity="0.4"/><rect x="30.00" y="22.00" width="1.00" height="1.3" fill="#ce9178" opacity="0.4"/><rect x="31.00" y="22.00" width="1.00" height="1.3" fill="#808080" opacity="0.4"/><rect x="32.00" y="22.00" width="2.00" height="1.3" fill="#808080" opacity="0.4"/><rect x="34.00" y="22.00" width="6.00" height="1.3" fill="#569cd6" opacity="0.4"/><rect x="40.00" y="22.00" width="1.00" height="1.3" fill="#808080" opacity="0.4"/><rect x="4.00" y="24.00" width="2.00" height="1.3" fill="#808080" opacity="0.4"/><rect x="6.00" y="24.00" width="3.00" height="1.3" fill="#569cd6" opacity="0.4"/><rect x="9.00" y="24.00" width="1.00" height="1.3" fill="#808080" opacity="0.4"/><rect x="4.00" y="26.00" width="1.00" height="1.3" fill="#808080" opacity="0.4"/><rect x="5.00" y="26.00" width="3.00" height="1.3" fill="#569cd6" opacity="0.4"/><rect x="9.00" y="26.00" width="2.00" height="1.3" fill="#9cdcfe" opacity="0.4"/><rect x="11.00" y="26.00" width="1.00" height="1.3" fill="#cccccc" opacity="0.4"/><rect x="12.00" y="26.00" width="1.00" height="1.3" fill="#ce9178" opacity="0.4"/><rect x="13.00" y="26.00" width="12.00" height="1.3" fill="#ce9178" opacity="0.4"/><rect x="25.00" y="26.00" width="1.00" height="1.3" fill="#ce9178" opacity="0.4"/><rect x="27.00" y="26.00" width="5.00" height="1.3" fill="#9cdcfe" opacity="0.4"/><rect x="32.00" y="26.00" width="1.00" height="1.3" fill="#cccccc" opacity="0.4"/><rect x="33.00" y="26.00" width="1.00" height="1.3" fill="#ce9178" opacity="0.4"/><rect x="34.00" y="26.00" width="6.00" height="1.3" fill="#ce9178" opacity="0.4"/><rect x="40.00" y="26.00" width="1.00" height="1.3" fill="#ce9178" opacity="0.4"/><rect x="41.00" y="26.00" width="1.00" height="1.3" fill="#808080" opacity="0.4"/><rect x="8.00" y="28.00" width="1.00" height="1.3" fill="#808080" opacity="0.4"/><rect x="9.00" y="28.00" width="1.00" height="1.3" fill="#569cd6" opacity="0.4"/><rect x="11.00" y="28.00" width="2.00" height="1.3" fill="#9cdcfe" opacity="0.4"/><rect x="13.00" y="28.00" width="1.00" height="1.3" fill="#cccccc" opacity="0.4"/><rect x="14.00" y="28.00" width="1.00" height="1.3" fill="#ce9178" opacity="0.4"/><rect x="15.00" y="28.00" width="13.00" height="1.3" fill="#ce9178" opacity="0.4"/><rect x="28.00" y="28.00" width="1.00" height="1.3" fill="#ce9178" opacity="0.4"/><rect x="29.00" y="28.00" width="1.00" height="1.3" fill="#808080" opacity="0.4"/><rect x="30.00" y="28.00" width="2.00" height="1.3" fill="#808080" opacity="0.4"/><rect x="32.00" y="28.00" width="1.00" height="1.3" fill="#569cd6" opacity="0.4"/><rect x="33.00" y="28.00" width="1.00" height="1.3" fill="#808080" opacity="0.4"/><rect x="4.00" y="30.00" width="2.00" height="1.3" fill="#808080" opacity="0.4"/><rect x="6.00" y="30.00" width="3.00" height="1.3" fill="#569cd6" opacity="0.4"/><rect x="9.00" y="30.00" width="1.00" height="1.3" fill="#808080" opacity="0.4"/><rect x="4.00" y="32.00" width="1.00" height="1.3" fill="#808080" opacity="0.4"/><rect x="5.00" y="32.00" width="6.00" height="1.3" fill="#569cd6" opacity="0.4"/><rect x="12.00" y="32.00" width="4.00" height="1.3" fill="#9cdcfe" opacity="0.4"/><rect x="16.00" y="32.00" width="1.00" height="1.3" fill="#cccccc" opacity="0.4"/><rect x="17.00" y="32.00" width="1.00" height="1.3" fill="#ce9178" opacity="0.4"/><rect x="18.00" y="32.00" width="9.00" height="1.3" fill="#ce9178" opacity="0.4"/><rect x="27.00" y="32.00" width="1.00" height="1.3" fill="#ce9178" opacity="0.4"/><rect x="28.00" y="32.00" width="1.00" height="1.3" fill="#808080" opacity="0.4"/><rect x="29.00" y="32.00" width="1.00" height="1.3" fill="#cccccc" opacity="0.4"/><rect x="8.00" y="34.00" width="12.00" height="1.3" fill="#cccccc" opacity="0.4"/><rect x="10.00" y="36.00" width="28.00" height="1.3" fill="#cccccc" opacity="0.4"/><rect x="8.00" y="38.00" width="1.00" height="1.3" fill="#cccccc" opacity="0.4"/><rect x="6.00" y="40.00" width="1.00" height="1.3" fill="#d7ba7d" opacity="0.4"/><rect x="4.00" y="42.00" width="2.00" height="1.3" fill="#808080" opacity="0.4"/><rect x="6.00" y="42.00" width="6.00" height="1.3" fill="#569cd6" opacity="0.4"/><rect x="12.00" y="42.00" width="1.00" height="1.3" fill="#808080" opacity="0.4"/><rect x="4.00" y="44.00" width="1.00" height="1.3" fill="#808080" opacity="0.4"/><rect x="5.00" y="44.00" width="6.00" height="1.3" fill="#569cd6" opacity="0.4"/><rect x="12.00" y="44.00" width="3.00" height="1.3" fill="#9cdcfe" opacity="0.4"/><rect x="15.00" y="44.00" width="1.00" height="1.3" fill="#cccccc" opacity="0.4"/><rect x="16.00" y="44.00" width="1.00" height="1.3" fill="#ce9178" opacity="0.4"/><rect x="17.00" y="44.00" width="7.00" height="1.3" fill="#ce9178" opacity="0.4"/><rect x="24.00" y="44.00" width="1.00" height="1.3" fill="#ce9178" opacity="0.4"/><rect x="26.00" y="44.00" width="4.00" height="1.3" fill="#9cdcfe" opacity="0.4"/><rect x="30.00" y="44.00" width="1.00" height="1.3" fill="#cccccc" opacity="0.4"/><rect x="31.00" y="44.00" width="1.00" height="1.3" fill="#ce9178" opacity="0.4"/><rect x="32.00" y="44.00" width="6.00" height="1.3" fill="#ce9178" opacity="0.4"/><rect x="38.00" y="44.00" width="1.00" height="1.3" fill="#ce9178" opacity="0.4"/><rect x="39.00" y="44.00" width="1.00" height="1.3" fill="#808080" opacity="0.4"/><rect x="40.00" y="44.00" width="2.00" height="1.3" fill="#808080" opacity="0.4"/><rect x="42.00" y="44.00" width="6.00" height="1.3" fill="#569cd6" opacity="0.4"/><rect x="48.00" y="44.00" width="1.00" height="1.3" fill="#808080" opacity="0.4"/><rect x="0.00" y="46.00" width="2.00" height="1.3" fill="#808080" opacity="0.4"/><rect x="2.00" y="46.00" width="4.00" height="1.3" fill="#569cd6" opacity="0.4"/><rect x="6.00" y="46.00" width="1.00" height="1.3" fill="#808080" opacity="0.4"/><rect x="0.00" y="48.00" width="2.00" height="1.3" fill="#808080" opacity="0.4"/><rect x="2.00" y="48.00" width="4.00" height="1.3" fill="#569cd6" opacity="0.4"/><rect x="6.00" y="48.00" width="1.00" height="1.3" fill="#808080" opacity="0.4"/></svg>
<div class="a" style="left:1443px;top:115px;width:1px;height:665px;background:#111111;"></div>
<div class="a" style="left:1443px;top:115px;width:15px;height:1px;background:#111111;"></div>
<div class="a" style="left:1445px;top:420px;width:12px;height:2px;background:#a0a0a0;"></div>
<svg style="left:0px;top:770px" width="40" height="36"><path d="M14 21.2l5.7 4.8-5.7 4.7M25.9 17.1l-5.8 4.6 5.8 4.9" stroke="#cccccc" stroke-width="1.3" fill="none"/></svg>
<svg style="left:51px;top:785px" width="18" height="18"><circle cx="9" cy="9" r="7.3" stroke="#cccccc" stroke-width="1.3" fill="none"/><path d="M6.2 6.2l5.6 5.6M11.8 6.2l-5.6 5.6" stroke="#cccccc" stroke-width="1.3"/></svg>
<div class="t fit" style="left:74.0px;top:784.0px;font-size:16.25px;line-height:20px;color:#cccccc;font-weight:normal;width:8.0px;"><span>0</span></div>
<svg style="left:87px;top:785px" width="18" height="17"><path d="M9 1.5L16.5 15.5H1.5z" stroke="#cccccc" stroke-width="1.3" fill="none" stroke-linejoin="round"/><path d="M9 6v5M9 12.5v1.6" stroke="#cccccc" stroke-width="1.4"/></svg>
<div class="t fit" style="left:110.0px;top:784.0px;font-size:16.25px;line-height:20px;color:#cccccc;font-weight:normal;width:8.0px;"><span>0</span></div>
<div class="t fit cjk" style="left:926.0px;top:783.5px;font-size:16.25px;line-height:20px;color:#cccccc;font-weight:normal;width:72.0px;"><span>行 25、列 8</span></div>
<div class="t fit cjk" style="left:1018.0px;top:783.5px;font-size:16.25px;line-height:20px;color:#cccccc;font-weight:normal;width:60.0px;"><span>スペース: 4</span></div>
<div class="t fit" style="left:1099.0px;top:783.5px;font-size:16.25px;line-height:20px;color:#cccccc;font-weight:normal;width:38.0px;"><span>UTF-8</span></div>
<div class="t fit" style="left:1158.0px;top:783.5px;font-size:16.25px;line-height:20px;color:#cccccc;font-weight:normal;width:32.0px;"><span>CRLF</span></div>
<div class="t fit" style="left:1213.0px;top:783.5px;font-size:16.25px;line-height:20px;color:#cccccc;font-weight:normal;width:15.0px;"><span>{ }</span></div>
<div class="t fit" style="left:1238.6px;top:783.5px;font-size:16.25px;line-height:20px;color:#cccccc;font-weight:normal;width:38.0px;"><span>HTML</span></div>
<svg style="left:1297px;top:785px" width="22" height="19"><g stroke="#cccccc" stroke-width="1.5" fill="none"><rect x="3" y="1" width="7.2" height="6.5" rx="2.6"/><rect x="10.3" y="1" width="7.2" height="6.5" rx="2.6"/><path d="M2.3 7.2C1 8.2 0.7 9.3 0.7 10.8v2c0 2 4.5 4.6 9.6 4.6s9.6-2.6 9.6-4.6v-2c0-1.5-.3-2.6-1.6-3.6M8 10.2v3.4M12.6 10.2v3.4"/></g></svg>
<svg style="left:1336px;top:786px" width="20" height="16"><path d="M4 1.5a9 9 0 0 0 0 13M16 1.5a9 9 0 0 1 0 13M6.8 4.3a5 5 0 0 0 0 7.4M13.2 4.3a5 5 0 0 1 0 7.4" stroke="#cccccc" stroke-width="1.3" fill="none"/><circle cx="10" cy="8" r="1.5" fill="#cccccc"/></svg>
<div class="t fit" style="left:1361.0px;top:783.5px;font-size:16.25px;line-height:20px;color:#cccccc;font-weight:normal;width:49.0px;"><span>Go Live</span></div>
<div class="a" style="left:1330px;top:801.5px;width:95px;height:3px;background:#ff0000;border-radius:1.5px"></div>
<svg style="left:1432px;top:785px" width="16" height="18"><path d="M2 13.5h12l-1.5-2.2V7a4.5 4.5 0 0 0-9 0v4.3z" stroke="#cccccc" stroke-width="1.3" fill="none" stroke-linejoin="round"/><path d="M6 15.5a2 2 0 0 0 4 0" stroke="#cccccc" stroke-width="1.3" fill="none"/></svg>
<div class="a" style="left:167px;top:182px;width:389px;height:622px;background:#1f1f1f;border:1px solid #454545;border-radius:6px;box-shadow:0 3px 10px rgba(0,0,0,.5)"></div>
<div class="a" style="left:173px;top:364px;width:377px;height:32px;background:#0078d4;border-radius:4px"></div>
<div class="a" style="left:168px;top:356px;width:387px;height:1px;background:#454545;"></div>
<div class="a" style="left:168px;top:435px;width:387px;height:1px;background:#454545;"></div>
<div class="a" style="left:168px;top:481px;width:387px;height:1px;background:#454545;"></div>
<div class="a" style="left:168px;top:527px;width:387px;height:1px;background:#454545;"></div>
<div class="a" style="left:168px;top:573px;width:387px;height:1px;background:#454545;"></div>
<div class="a" style="left:168px;top:651px;width:387px;height:1px;background:#454545;"></div>
<div class="a" style="left:168px;top:730px;width:387px;height:1px;background:#454545;"></div>
<div class="t fit" style="left:205.0px;top:195.6px;font-size:16.25px;line-height:20px;color:#cccccc;font-weight:normal;width:155.8px;"><span>Open with Live Server</span></div>
<div class="t fit" style="left:431.0px;top:195.6px;font-size:16.25px;line-height:20px;color:#bdbdbd;font-weight:normal;width:86.6px;"><span>Alt+L Alt+O</span></div>
<div class="t fit cjk" style="left:205.0px;top:228.0px;font-size:16.25px;line-height:20px;color:#cccccc;font-weight:normal;width:98.0px;"><span>横に並べて開く</span></div>
<div class="t fit" style="left:444.0px;top:228.0px;font-size:16.25px;line-height:20px;color:#bdbdbd;font-weight:normal;width:73.6px;"><span>Ctrl+Enter</span></div>
<div class="t fit cjk" style="left:205.0px;top:260.0px;font-size:16.25px;line-height:20px;color:#cccccc;font-weight:normal;width:163.0px;"><span>エクスプローラーで表示する</span></div>
<div class="t fit" style="left:433.5px;top:260.0px;font-size:16.25px;line-height:20px;color:#bdbdbd;font-weight:normal;width:84.1px;"><span>Shift+Alt+R</span></div>
<div class="t fit cjk" style="left:205.0px;top:292.5px;font-size:16.25px;line-height:20px;color:#cccccc;font-weight:normal;width:234.0px;"><span>ファイルを開くアプリケーションの選択...</span></div>
<div class="t fit cjk" style="left:205.0px;top:325.0px;font-size:16.25px;line-height:20px;color:#cccccc;font-weight:normal;width:131.5px;"><span>統合ターミナルで開く</span></div>
<div class="t fit cjk" style="left:205.0px;top:370.5px;font-size:16.25px;line-height:20px;color:#ffffff;font-weight:normal;width:100.0px;"><span>プレビューの表示</span></div>
<div class="t fit cjk" style="left:205.0px;top:403.0px;font-size:16.25px;line-height:20px;color:#cccccc;font-weight:normal;width:210.0px;"><span>サーバーの起動時に自動的に開く</span></div>
<div class="t fit cjk" style="left:205.0px;top:449.0px;font-size:16.25px;line-height:20px;color:#cccccc;font-weight:normal;width:110.4px;"><span>比較対象の選択</span></div>
<div class="t fit cjk" style="left:205.0px;top:495.0px;font-size:16.25px;line-height:20px;color:#cccccc;font-weight:normal;width:111.0px;"><span>タイムラインを開く</span></div>
<div class="t fit cjk" style="left:205.0px;top:541.0px;font-size:16.25px;line-height:20px;color:#cccccc;font-weight:normal;width:148.0px;"><span>ファイルをチャットに追加</span></div>
<div class="t fit cjk" style="left:205.0px;top:587.0px;font-size:16.25px;line-height:20px;color:#cccccc;font-weight:normal;width:55.0px;"><span>切り取り</span></div>
<div class="t fit" style="left:472.0px;top:587.0px;font-size:16.25px;line-height:20px;color:#bdbdbd;font-weight:normal;width:45.6px;"><span>Ctrl+X</span></div>
<div class="t fit cjk" style="left:205.0px;top:620.0px;font-size:16.25px;line-height:20px;color:#cccccc;font-weight:normal;width:33.0px;"><span>コピー</span></div>
<div class="t fit" style="left:472.0px;top:620.0px;font-size:16.25px;line-height:20px;color:#bdbdbd;font-weight:normal;width:45.6px;"><span>Ctrl+C</span></div>
<div class="t fit cjk" style="left:205.0px;top:666.0px;font-size:16.25px;line-height:20px;color:#cccccc;font-weight:normal;width:71.7px;"><span>パスのコピー</span></div>
<div class="t fit" style="left:433.0px;top:666.0px;font-size:16.25px;line-height:20px;color:#bdbdbd;font-weight:normal;width:84.6px;"><span>Shift+Alt+C</span></div>
<div class="t fit cjk" style="left:205.0px;top:698.0px;font-size:16.25px;line-height:20px;color:#cccccc;font-weight:normal;width:103.7px;"><span>相対パスをコピー</span></div>
<div class="t fit" style="left:378.0px;top:698.0px;font-size:16.25px;line-height:20px;color:#bdbdbd;font-weight:normal;width:139.6px;"><span>Ctrl+K Ctrl+Shift+C</span></div>
<div class="t fit cjk" style="left:205.0px;top:745.0px;font-size:16.25px;line-height:20px;color:#cccccc;font-weight:normal;width:88.7px;"><span>名前の変更...</span></div>
<div class="t fit" style="left:501.4px;top:745.0px;font-size:16.25px;line-height:20px;color:#bdbdbd;font-weight:normal;width:16.2px;"><span>F2</span></div>
<div class="t fit cjk" style="left:205.0px;top:777.0px;font-size:16.25px;line-height:20px;color:#cccccc;font-weight:normal;width:32.0px;"><span>削除</span></div>
<div class="t fit" style="left:472.0px;top:777.0px;font-size:16.25px;line-height:20px;color:#bdbdbd;font-weight:normal;width:45.6px;"><span>Delete</span></div>
<div class="a" style="left:163px;top:358px;width:395px;height:46.5px;background:transparent;border:3.4px solid #ff0000"></div>
<div class="a" style="left:75px;top:332.5px;width:100px;height:3px;background:#ff0000;border-radius:1.5px"></div>
<script>(function(){
function fit(sel){document.querySelectorAll(sel).forEach(function(e){var s=e.firstElementChild;if(!s)return;var w=parseFloat(e.style.width);var n=s.offsetWidth;if(n>0&&w>0&&Math.abs(n-w)>0.05){s.style.transform='scaleX('+(w/n)+')';}});}
fit('.jpc');fit('.fit');fit('.fitc');
})();</script>
</body></html>
